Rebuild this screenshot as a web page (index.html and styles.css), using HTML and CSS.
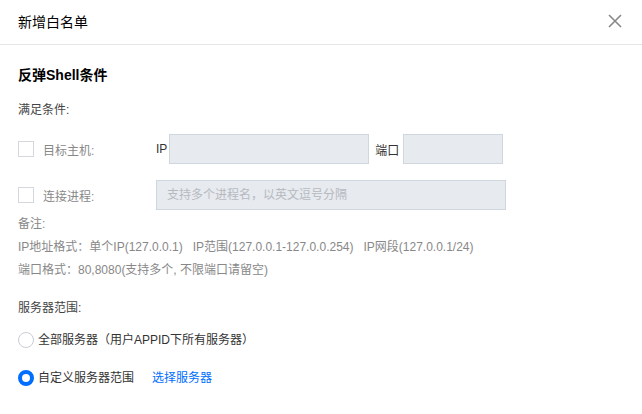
FILE: index.html
```html
<!DOCTYPE html>
<html lang="zh">
<head>
  <meta charset="UTF-8" />
  <title>新增白名单</title>
  <link rel="stylesheet" href="styles.css">
</head>
<body>
  <div class="dialog">
    <div class="dialog-header">
      <h3>新增白名单</h3>
      <span class="close">
        <svg width="14" height="14" viewBox="0 0 14 14"><path d="M1 1L13 13M13 1L1 13" stroke="#888" stroke-width="1.6" fill="none"/></svg>
      </span>
    </div>
    <div class="dialog-body">
      <h4 class="section-title">反弹Shell条件</h4>
      <div class="label">满足条件:</div>

      <div class="cond-row">
        <label class="check"><span class="box"></span><span class="check-text">目标主机:</span></label>
        <div class="fields">
          <span class="field-label">IP</span>
          <input class="input ip" type="text" />
          <span class="field-label port-label">端口</span>
          <input class="input port" type="text" />
        </div>
      </div>

      <div class="cond-row">
        <label class="check"><span class="box"></span><span class="check-text">连接进程:</span></label>
        <div class="fields">
          <input class="input proc" type="text" placeholder="支持多个进程名，以英文逗号分隔" />
        </div>
      </div>

      <div class="notes">
        <p>备注:</p>
        <p>IP地址格式：单个IP(127.0.0.1)&nbsp;&nbsp;&nbsp;IP范围(127.0.0.1-127.0.0.254)&nbsp;&nbsp;&nbsp;IP网段(127.0.0.1/24)</p>
        <p>端口格式：80,8080(支持多个, 不限端口请留空)</p>
      </div>

      <div class="label scope-label">服务器范围:</div>
      <label class="radio"><span class="circle"></span>全部服务器（用户APPID下所有服务器）</label>
      <label class="radio checked"><span class="circle"></span>自定义服务器范围<a class="link" href="#">选择服务器</a></label>
    </div>
  </div>
</body>
</html>
```

FILE: styles.css
```css
* {
  margin: 0;
  padding: 0;
  box-sizing: border-box;
  font-family: "Liberation Sans", "Noto Sans CJK SC", sans-serif;
}

body {
  background: #fff;
  width: 642px;
  height: 414px;
  overflow: hidden;
}

.dialog {
  width: 642px;
}

.dialog-header {
  height: 45px;
  border-bottom: 1px solid #e5e5e5;
  display: flex;
  align-items: center;
  justify-content: space-between;
  padding: 0 20px 0 18px;
}

.dialog-header h3 {
  font-size: 14px;
  font-weight: normal;
  color: #000;
  margin-top: -2px;
}

.close {
  display: flex;
  margin-top: -2px;
}

.dialog-body {
  padding: 20px 18px 0;
}

.section-title {
  font-size: 14px;
  font-weight: bold;
  color: #000;
  line-height: 20px;
}

.label {
  font-size: 12px;
  color: #444;
  margin-top: 16px;
  line-height: 18px;
}

.cond-row {
  display: flex;
  align-items: center;
  margin-top: 15px;
}

.cond-row + .cond-row {
  margin-top: 16px;
}

.check {
  display: flex;
  align-items: center;
  width: 138px;
}

.box {
  width: 16px;
  height: 16px;
  border: 1px solid #d4d8de;
  background: #fff;
}

.check-text {
  font-size: 12px;
  color: #888;
  margin-left: 9px;
}

.fields {
  display: flex;
  align-items: center;
}

.field-label {
  font-size: 12px;
  color: #333;
  margin-right: 2px;
}

.port-label {
  margin-left: 6px;
  margin-right: 4px;
}

.input {
  height: 30px;
  background: #e7eaef;
  border: 1px solid #d0d6de;
  outline: none;
  font-size: 12px;
  padding: 0 10px;
  color: #333;
}

.input.ip {
  width: 200px;
}

.input.port {
  width: 100px;
}

.input.proc {
  width: 350px;
}

.input::placeholder {
  color: #b5b9c0;
}

.notes {
  margin-top: 3px;
}

.notes p {
  font-size: 12px;
  color: #888;
  line-height: 23px;
}

.scope-label {
  margin-top: 17px;
}

.radio {
  display: flex;
  align-items: center;
  font-size: 12px;
  color: #333;
  margin-top: 14px;
  line-height: 18px;
}

.radio + .radio {
  margin-top: 20px;
}

.circle {
  width: 16px;
  height: 16px;
  border-radius: 50%;
  border: 1px solid #c8ccd2;
  background: #fff;
  margin-right: 4px;
}

.radio.checked .circle {
  border: 4px solid #006eff;
}

.link {
  color: #006eff;
  text-decoration: none;
  margin-left: 18px;
}
```
